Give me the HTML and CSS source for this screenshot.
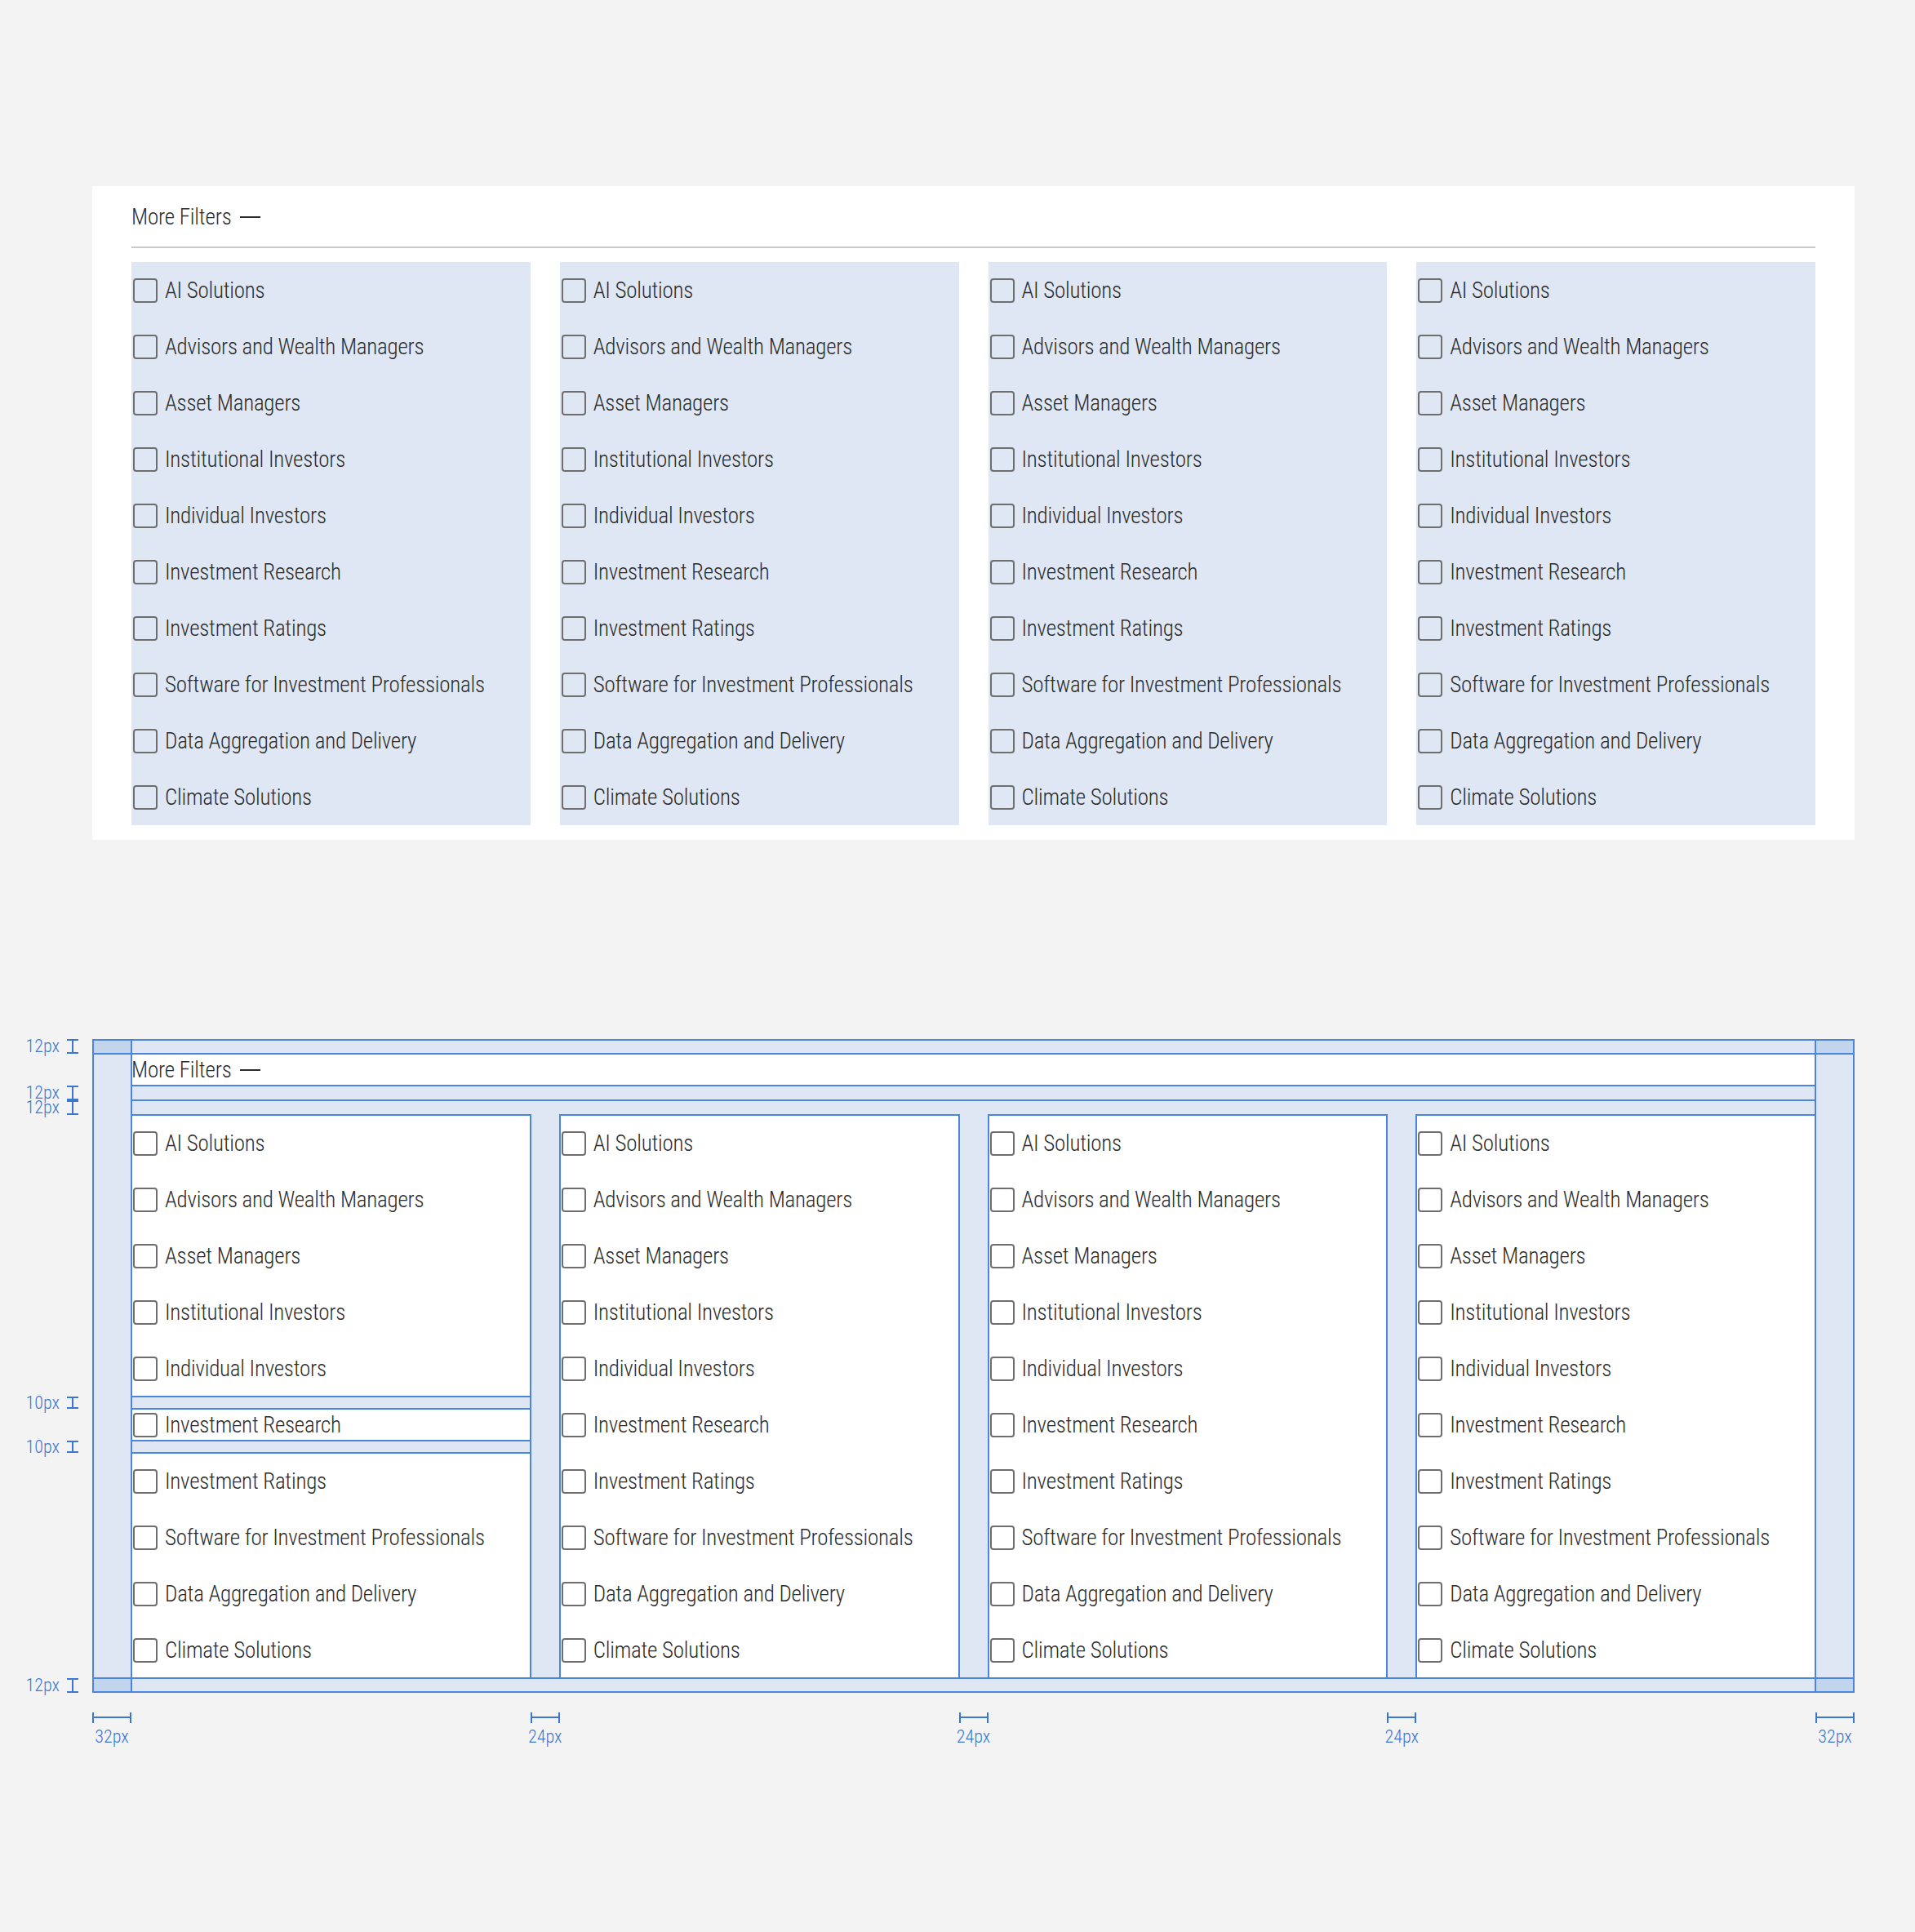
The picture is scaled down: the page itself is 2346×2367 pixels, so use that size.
FILE: index.html
```html
<!DOCTYPE html>
<html lang="en">
<head>
<meta charset="utf-8">
<title>More Filters</title>
<link rel="stylesheet" href="styles.css">
</head>
<body>
<main class="page">

  <!-- Filter panel as shipped -->
  <section class="panel">
    <header class="panel-head">
      <div class="panel-title">More Filters <span class="panel-toggle" aria-hidden="true"></span></div>
    </header>
    <div class="filters">
      <ul class="filters__col">
        <li class="filters__item"><label class="check"><input type="checkbox" class="check__box"><span class="check__text">AI Solutions</span></label></li>
        <li class="filters__item"><label class="check"><input type="checkbox" class="check__box"><span class="check__text">Advisors and Wealth Managers</span></label></li>
        <li class="filters__item"><label class="check"><input type="checkbox" class="check__box"><span class="check__text">Asset Managers</span></label></li>
        <li class="filters__item"><label class="check"><input type="checkbox" class="check__box"><span class="check__text">Institutional Investors</span></label></li>
        <li class="filters__item"><label class="check"><input type="checkbox" class="check__box"><span class="check__text">Individual Investors</span></label></li>
        <li class="filters__item"><label class="check"><input type="checkbox" class="check__box"><span class="check__text">Investment Research</span></label></li>
        <li class="filters__item"><label class="check"><input type="checkbox" class="check__box"><span class="check__text">Investment Ratings</span></label></li>
        <li class="filters__item"><label class="check"><input type="checkbox" class="check__box"><span class="check__text">Software for Investment Professionals</span></label></li>
        <li class="filters__item"><label class="check"><input type="checkbox" class="check__box"><span class="check__text">Data Aggregation and Delivery</span></label></li>
        <li class="filters__item"><label class="check"><input type="checkbox" class="check__box"><span class="check__text">Climate Solutions</span></label></li>
      </ul>
      <ul class="filters__col">
        <li class="filters__item"><label class="check"><input type="checkbox" class="check__box"><span class="check__text">AI Solutions</span></label></li>
        <li class="filters__item"><label class="check"><input type="checkbox" class="check__box"><span class="check__text">Advisors and Wealth Managers</span></label></li>
        <li class="filters__item"><label class="check"><input type="checkbox" class="check__box"><span class="check__text">Asset Managers</span></label></li>
        <li class="filters__item"><label class="check"><input type="checkbox" class="check__box"><span class="check__text">Institutional Investors</span></label></li>
        <li class="filters__item"><label class="check"><input type="checkbox" class="check__box"><span class="check__text">Individual Investors</span></label></li>
        <li class="filters__item"><label class="check"><input type="checkbox" class="check__box"><span class="check__text">Investment Research</span></label></li>
        <li class="filters__item"><label class="check"><input type="checkbox" class="check__box"><span class="check__text">Investment Ratings</span></label></li>
        <li class="filters__item"><label class="check"><input type="checkbox" class="check__box"><span class="check__text">Software for Investment Professionals</span></label></li>
        <li class="filters__item"><label class="check"><input type="checkbox" class="check__box"><span class="check__text">Data Aggregation and Delivery</span></label></li>
        <li class="filters__item"><label class="check"><input type="checkbox" class="check__box"><span class="check__text">Climate Solutions</span></label></li>
      </ul>
      <ul class="filters__col">
        <li class="filters__item"><label class="check"><input type="checkbox" class="check__box"><span class="check__text">AI Solutions</span></label></li>
        <li class="filters__item"><label class="check"><input type="checkbox" class="check__box"><span class="check__text">Advisors and Wealth Managers</span></label></li>
        <li class="filters__item"><label class="check"><input type="checkbox" class="check__box"><span class="check__text">Asset Managers</span></label></li>
        <li class="filters__item"><label class="check"><input type="checkbox" class="check__box"><span class="check__text">Institutional Investors</span></label></li>
        <li class="filters__item"><label class="check"><input type="checkbox" class="check__box"><span class="check__text">Individual Investors</span></label></li>
        <li class="filters__item"><label class="check"><input type="checkbox" class="check__box"><span class="check__text">Investment Research</span></label></li>
        <li class="filters__item"><label class="check"><input type="checkbox" class="check__box"><span class="check__text">Investment Ratings</span></label></li>
        <li class="filters__item"><label class="check"><input type="checkbox" class="check__box"><span class="check__text">Software for Investment Professionals</span></label></li>
        <li class="filters__item"><label class="check"><input type="checkbox" class="check__box"><span class="check__text">Data Aggregation and Delivery</span></label></li>
        <li class="filters__item"><label class="check"><input type="checkbox" class="check__box"><span class="check__text">Climate Solutions</span></label></li>
      </ul>
      <ul class="filters__col">
        <li class="filters__item"><label class="check"><input type="checkbox" class="check__box"><span class="check__text">AI Solutions</span></label></li>
        <li class="filters__item"><label class="check"><input type="checkbox" class="check__box"><span class="check__text">Advisors and Wealth Managers</span></label></li>
        <li class="filters__item"><label class="check"><input type="checkbox" class="check__box"><span class="check__text">Asset Managers</span></label></li>
        <li class="filters__item"><label class="check"><input type="checkbox" class="check__box"><span class="check__text">Institutional Investors</span></label></li>
        <li class="filters__item"><label class="check"><input type="checkbox" class="check__box"><span class="check__text">Individual Investors</span></label></li>
        <li class="filters__item"><label class="check"><input type="checkbox" class="check__box"><span class="check__text">Investment Research</span></label></li>
        <li class="filters__item"><label class="check"><input type="checkbox" class="check__box"><span class="check__text">Investment Ratings</span></label></li>
        <li class="filters__item"><label class="check"><input type="checkbox" class="check__box"><span class="check__text">Software for Investment Professionals</span></label></li>
        <li class="filters__item"><label class="check"><input type="checkbox" class="check__box"><span class="check__text">Data Aggregation and Delivery</span></label></li>
        <li class="filters__item"><label class="check"><input type="checkbox" class="check__box"><span class="check__text">Climate Solutions</span></label></li>
      </ul>
    </div>
  </section>

  <!-- Same panel with its spacing spec drawn on top -->
  <section class="panel panel--spec">
    <header class="panel-head">
      <div class="panel-title">More Filters <span class="panel-toggle" aria-hidden="true"></span></div>
    </header>
    <div class="filters">
      <ul class="filters__col">
        <li class="filters__item"><label class="check"><input type="checkbox" class="check__box"><span class="check__text">AI Solutions</span></label></li>
        <li class="filters__item"><label class="check"><input type="checkbox" class="check__box"><span class="check__text">Advisors and Wealth Managers</span></label></li>
        <li class="filters__item"><label class="check"><input type="checkbox" class="check__box"><span class="check__text">Asset Managers</span></label></li>
        <li class="filters__item"><label class="check"><input type="checkbox" class="check__box"><span class="check__text">Institutional Investors</span></label></li>
        <li class="filters__item"><label class="check"><input type="checkbox" class="check__box"><span class="check__text">Individual Investors</span></label></li>
        <li class="filters__item filters__item--measure"><label class="check"><input type="checkbox" class="check__box"><span class="check__text">Investment Research</span></label></li>
        <li class="filters__item"><label class="check"><input type="checkbox" class="check__box"><span class="check__text">Investment Ratings</span></label></li>
        <li class="filters__item"><label class="check"><input type="checkbox" class="check__box"><span class="check__text">Software for Investment Professionals</span></label></li>
        <li class="filters__item"><label class="check"><input type="checkbox" class="check__box"><span class="check__text">Data Aggregation and Delivery</span></label></li>
        <li class="filters__item"><label class="check"><input type="checkbox" class="check__box"><span class="check__text">Climate Solutions</span></label></li>
      </ul>
      <ul class="filters__col">
        <li class="filters__item"><label class="check"><input type="checkbox" class="check__box"><span class="check__text">AI Solutions</span></label></li>
        <li class="filters__item"><label class="check"><input type="checkbox" class="check__box"><span class="check__text">Advisors and Wealth Managers</span></label></li>
        <li class="filters__item"><label class="check"><input type="checkbox" class="check__box"><span class="check__text">Asset Managers</span></label></li>
        <li class="filters__item"><label class="check"><input type="checkbox" class="check__box"><span class="check__text">Institutional Investors</span></label></li>
        <li class="filters__item"><label class="check"><input type="checkbox" class="check__box"><span class="check__text">Individual Investors</span></label></li>
        <li class="filters__item"><label class="check"><input type="checkbox" class="check__box"><span class="check__text">Investment Research</span></label></li>
        <li class="filters__item"><label class="check"><input type="checkbox" class="check__box"><span class="check__text">Investment Ratings</span></label></li>
        <li class="filters__item"><label class="check"><input type="checkbox" class="check__box"><span class="check__text">Software for Investment Professionals</span></label></li>
        <li class="filters__item"><label class="check"><input type="checkbox" class="check__box"><span class="check__text">Data Aggregation and Delivery</span></label></li>
        <li class="filters__item"><label class="check"><input type="checkbox" class="check__box"><span class="check__text">Climate Solutions</span></label></li>
      </ul>
      <ul class="filters__col">
        <li class="filters__item"><label class="check"><input type="checkbox" class="check__box"><span class="check__text">AI Solutions</span></label></li>
        <li class="filters__item"><label class="check"><input type="checkbox" class="check__box"><span class="check__text">Advisors and Wealth Managers</span></label></li>
        <li class="filters__item"><label class="check"><input type="checkbox" class="check__box"><span class="check__text">Asset Managers</span></label></li>
        <li class="filters__item"><label class="check"><input type="checkbox" class="check__box"><span class="check__text">Institutional Investors</span></label></li>
        <li class="filters__item"><label class="check"><input type="checkbox" class="check__box"><span class="check__text">Individual Investors</span></label></li>
        <li class="filters__item"><label class="check"><input type="checkbox" class="check__box"><span class="check__text">Investment Research</span></label></li>
        <li class="filters__item"><label class="check"><input type="checkbox" class="check__box"><span class="check__text">Investment Ratings</span></label></li>
        <li class="filters__item"><label class="check"><input type="checkbox" class="check__box"><span class="check__text">Software for Investment Professionals</span></label></li>
        <li class="filters__item"><label class="check"><input type="checkbox" class="check__box"><span class="check__text">Data Aggregation and Delivery</span></label></li>
        <li class="filters__item"><label class="check"><input type="checkbox" class="check__box"><span class="check__text">Climate Solutions</span></label></li>
      </ul>
      <ul class="filters__col">
        <li class="filters__item"><label class="check"><input type="checkbox" class="check__box"><span class="check__text">AI Solutions</span></label></li>
        <li class="filters__item"><label class="check"><input type="checkbox" class="check__box"><span class="check__text">Advisors and Wealth Managers</span></label></li>
        <li class="filters__item"><label class="check"><input type="checkbox" class="check__box"><span class="check__text">Asset Managers</span></label></li>
        <li class="filters__item"><label class="check"><input type="checkbox" class="check__box"><span class="check__text">Institutional Investors</span></label></li>
        <li class="filters__item"><label class="check"><input type="checkbox" class="check__box"><span class="check__text">Individual Investors</span></label></li>
        <li class="filters__item"><label class="check"><input type="checkbox" class="check__box"><span class="check__text">Investment Research</span></label></li>
        <li class="filters__item"><label class="check"><input type="checkbox" class="check__box"><span class="check__text">Investment Ratings</span></label></li>
        <li class="filters__item"><label class="check"><input type="checkbox" class="check__box"><span class="check__text">Software for Investment Professionals</span></label></li>
        <li class="filters__item"><label class="check"><input type="checkbox" class="check__box"><span class="check__text">Data Aggregation and Delivery</span></label></li>
        <li class="filters__item"><label class="check"><input type="checkbox" class="check__box"><span class="check__text">Climate Solutions</span></label></li>
      </ul>
    </div>

    <!-- vertical spacing callouts -->
    <div class="note note--top"><span class="note__label">12px</span><span class="ibeam"></span></div>
    <div class="note note--head"><span class="note__label">12px</span><span class="ibeam"></span></div>
    <div class="note note--rule"><span class="note__label">12px</span><span class="ibeam"></span></div>
    <div class="note note--item-top"><span class="note__label">10px</span><span class="ibeam"></span></div>
    <div class="note note--item-bottom"><span class="note__label">10px</span><span class="ibeam"></span></div>
    <div class="note note--bottom"><span class="note__label">12px</span><span class="ibeam"></span></div>
  </section>

  <!-- horizontal spacing callouts -->
  <div class="measure-row">
    <div class="measure"><span class="hbeam"></span><span class="measure__label">32px</span></div>
    <div></div>
    <div class="measure"><span class="hbeam"></span><span class="measure__label">24px</span></div>
    <div></div>
    <div class="measure"><span class="hbeam"></span><span class="measure__label">24px</span></div>
    <div></div>
    <div class="measure"><span class="hbeam"></span><span class="measure__label">24px</span></div>
    <div></div>
    <div class="measure"><span class="hbeam"></span><span class="measure__label">32px</span></div>
  </div>
</main>
</body>
</html>
```

FILE: styles.css
```css
:root {
  --page: #f3f3f3;
  --ink: #2c2c2c;
  --fill: #dee7f3;
  --corner: #c3d5ec;
  --line: #4a86dc;
  --note: #3a76d2;
  --rule: #c9c9c9;
}

html,
body {
  margin: 0;
  background: var(--page);
}

body {
  min-height: 2367px;
  font-family: "Roboto Condensed", "Roboto", sans-serif;
  font-weight: 300;
  color: var(--ink);
}

.page {
  width: 2159px;
  padding: 228px 0 0 113px;
}

/* ---------- panel ---------- */
.panel {
  background: #fff;
  padding: 18px 48px;
}

.panel-head {
  padding-bottom: 17px;
  border-bottom: 2px solid var(--rule);
}

.panel-title {
  display: flex;
  align-items: center;
  height: 39px;
  font-size: 27px;
  letter-spacing: -0.2px;
}

.panel-toggle {
  width: 25px;
  height: 2px;
  margin-left: 10px;
  background: var(--ink);
}

.filters {
  display: grid;
  grid-template-columns: repeat(4, 1fr);
  column-gap: 36px;
  margin-top: 17px;
}

.filters__col {
  list-style: none;
  margin: 0;
  padding: 0;
  background: var(--fill);
}

.filters__item {
  padding: 15px 0;
}

.check {
  display: flex;
  align-items: center;
  height: 39px;
  font-size: 27px;
  letter-spacing: -0.25px;
  white-space: nowrap;
}

.check__box {
  appearance: none;
  -webkit-appearance: none;
  flex: none;
  box-sizing: border-box;
  width: 30px;
  height: 30px;
  margin: 0 9px 0 2px;
  border: 2px solid #6e6e6e;
  border-radius: 4px;
  background: transparent;
}

/* ---------- spec overlay ---------- */
.panel--spec {
  position: relative;
  margin-top: 244px;
  background-color: var(--fill);
  outline: 2px solid var(--line);
  outline-offset: -2px;
  background-image:
    linear-gradient(var(--line), var(--line)),
    linear-gradient(var(--line), var(--line)),
    linear-gradient(var(--line), var(--line)),
    linear-gradient(var(--line), var(--line)),
    linear-gradient(var(--corner), var(--corner)),
    linear-gradient(var(--corner), var(--corner)),
    linear-gradient(var(--corner), var(--corner)),
    linear-gradient(var(--corner), var(--corner));
  background-size:
    2px 100%,
    2px 100%,
    100% 2px,
    100% 2px,
    48px 18px,
    48px 18px,
    48px 18px,
    48px 18px;
  background-position:
    left 47px top 0,
    right 47px top 0,
    left 0 top 17px,
    left 0 bottom 17px,
    left top,
    right top,
    left bottom,
    right bottom;
  background-repeat: no-repeat;
}

.panel--spec .panel-head {
  border-bottom-color: var(--line);
}

.panel--spec .panel-title {
  background: #fff;
  outline: 2px solid var(--line);
  outline-offset: -1px;
}

.panel--spec .filters__col {
  background: #fff;
  outline: 2px solid var(--line);
  outline-offset: -1px;
}

.panel--spec .filters__item--measure {
  background: var(--fill);
  outline: 2px solid var(--line);
  outline-offset: -1px;
}

.panel--spec .filters__item--measure .check {
  background: #fff;
  outline: 2px solid var(--line);
  outline-offset: -1px;
}

/* vertical callouts, left of the panel */
.note {
  position: absolute;
  right: calc(100% + 17px);
  display: flex;
  align-items: center;
  gap: 9px;
  color: var(--note);
  font-size: 22px;
  line-height: 1;
}

.note--top { top: 0; height: 18px; }
.note--head { top: 57px; height: 18px; }
.note--rule { top: 75px; height: 18px; }
.note--item-top { top: 438px; height: 15px; }
.note--item-bottom { top: 492px; height: 15px; }
.note--bottom { top: 783px; height: 18px; }

.ibeam {
  position: relative;
  box-sizing: border-box;
  width: 14px;
  height: 100%;
  border-top: 2px solid currentColor;
  border-bottom: 2px solid currentColor;
}

.ibeam::before {
  content: "";
  position: absolute;
  left: 6px;
  top: 0;
  bottom: 0;
  width: 2px;
  background: currentColor;
}

/* horizontal callouts, below the panel */
.measure-row {
  display: grid;
  grid-template-columns: 48px 1fr 36px 1fr 36px 1fr 36px 1fr 48px;
  margin-top: 24px;
  color: var(--note);
}

.measure {
  display: flex;
  flex-direction: column;
  align-items: center;
  gap: 6px;
}

.hbeam {
  position: relative;
  box-sizing: border-box;
  align-self: stretch;
  height: 13px;
  border-left: 2px solid currentColor;
  border-right: 2px solid currentColor;
}

.hbeam::before {
  content: "";
  position: absolute;
  left: 0;
  right: 0;
  top: 5px;
  height: 2px;
  background: currentColor;
}

.measure__label {
  font-size: 22px;
  line-height: 22px;
}
```
